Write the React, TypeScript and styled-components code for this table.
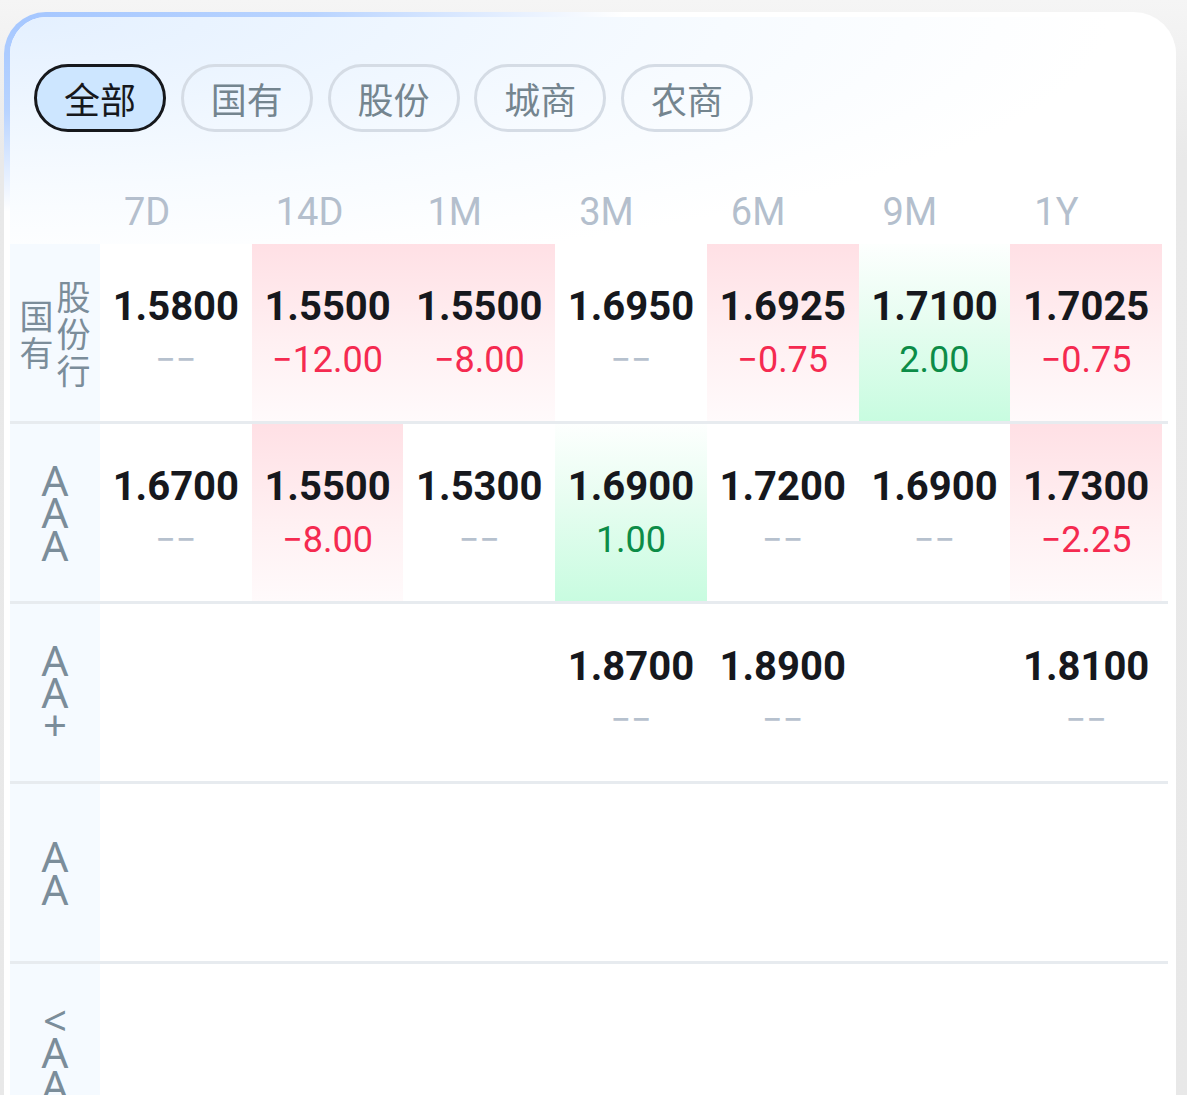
import React from 'react';
import styled, { createGlobalStyle } from 'styled-components';

const Global = createGlobalStyle`
  html, body { margin: 0; padding: 0; overflow: hidden; }
  body {
    background: linear-gradient(180deg, #f5f5f5 0px, #e9e9e9 160px, #e8e8e8 100%);
    min-height: 100vh;
    font-family: Roboto, "Noto Sans", "Noto Sans CJK SC", sans-serif;
  }
`;

const Page = styled.div`
  padding: 12px 11px 0 4px;
`;

const Card = styled.div`
  border-style: solid;
  border-color: transparent;
  border-width: 5px 0 0 6px;
  border-radius: 42px 42px 0 0;
  background:
    linear-gradient(#ffffff, #ffffff) padding-box,
    radial-gradient(ellipse 620px 200px at 0 0, #a4c6ff 0%, #b9d4ff 50%, #ffffff 100%) border-box;
  overflow: hidden;
`;

const Head = styled.div`
  background: radial-gradient(ellipse 1100px 260px at 0 0, #e4f0ff 0%, #eef6ff 35%, #f7fbff 65%, #fdfeff 90%, #ffffff 100%);
  padding: 47px 0 0 24px;
`;

const Tabs = styled.div`
  display: flex;
  gap: 14.75px;
`;

const Tab = styled.div<{ $active?: boolean }>`
  box-sizing: border-box;
  width: 132px;
  height: 68px;
  border-radius: 34px;
  border: 3px solid ${(p) => (p.$active ? '#16181c' : '#d5dce5')};
  background: ${(p) => (p.$active ? '#cde6ff' : 'transparent')};
  color: ${(p) => (p.$active ? '#16181c' : '#74858f')};
  font-family: "Noto Sans CJK SC", sans-serif;
  font-size: 36px;
  display: flex;
  align-items: center;
  justify-content: center;
`;

const Grid = styled.div`
  display: grid;
  grid-template-columns: 90px repeat(7, 1fr) 6px;
  margin-right: 8px;
`;

const HeadGrid = styled(Grid)`
  margin-top: 48px;
  margin-left: -24px;
  height: 64px;
  align-items: center;
`;

const ColTitle = styled.div`
  padding-left: 24px;
  font-size: 38px;
  color: #b4bfcd;
  font-family: Roboto, sans-serif;
  line-height: 1;
`;

const Row = styled(Grid)`
  height: 177px;
  border-bottom: 3px solid #e7ebef;
`;

const LabelCell = styled.div`
  background: #f5faff;
  display: flex;
  justify-content: center;
  align-items: center;
  gap: 3px;
  color: #7b8d9a;
`;

const LabelCol = styled.div`
  display: flex;
  flex-direction: column;
  align-items: center;
`;

const LabelChar = styled.span<{ $latin?: boolean }>`
  display: block;
  font-family: ${(p) => (p.$latin ? '"Noto Sans", sans-serif' : '"Noto Sans CJK SC", sans-serif')};
  font-size: ${(p) => (p.$latin ? '42px' : '34px')};
  line-height: ${(p) => (p.$latin ? '32.5px' : '37px')};
  height: ${(p) => (p.$latin ? '32.5px' : '37px')};
`;

type Tone = 'up' | 'down';

const ValueCell = styled.div<{ $tone?: Tone }>`
  display: flex;
  flex-direction: column;
  align-items: center;
  justify-content: center;
  background: ${(p) =>
    p.$tone === 'down'
      ? 'linear-gradient(180deg, #ffe0e5 0%, #fff0f2 55%, #fffafb 100%)'
      : p.$tone === 'up'
      ? 'linear-gradient(180deg, #fdfffe 0%, #e6fdf0 45%, #c8fce0 100%)'
      : '#ffffff'};
`;

const Main = styled.div`
  font-family: Roboto, sans-serif;
  font-weight: 700;
  font-size: 40px;
  line-height: 48px;
  color: #16181d;
`;

const Sub = styled.div<{ $tone?: Tone }>`
  font-family: Roboto, sans-serif;
  font-size: 36px;
  line-height: 46px;
  margin-top: 6px;
  color: ${(p) => (p.$tone === 'down' ? '#f52a50' : p.$tone === 'up' ? '#0c8c47' : '#b6c1ce')};
`;

const Filler = styled.div``;

type Cell = { v: string; d?: string; tone?: Tone } | null;

const cols = ['7D', '14D', '1M', '3M', '6M', '9M', '1Y'];
const tabs = ['全部', '国有', '股份', '城商', '农商'];

const rows: { label: string[][]; latin?: boolean; cells: Cell[] }[] = [
  {
    label: [['国', '有'], ['股', '份', '行']],
    cells: [
      { v: '1.5800' },
      { v: '1.5500', d: '−12.00', tone: 'down' },
      { v: '1.5500', d: '−8.00', tone: 'down' },
      { v: '1.6950' },
      { v: '1.6925', d: '−0.75', tone: 'down' },
      { v: '1.7100', d: '2.00', tone: 'up' },
      { v: '1.7025', d: '−0.75', tone: 'down' },
    ],
  },
  {
    label: [['A', 'A', 'A']],
    latin: true,
    cells: [
      { v: '1.6700' },
      { v: '1.5500', d: '−8.00', tone: 'down' },
      { v: '1.5300' },
      { v: '1.6900', d: '1.00', tone: 'up' },
      { v: '1.7200' },
      { v: '1.6900' },
      { v: '1.7300', d: '−2.25', tone: 'down' },
    ],
  },
  {
    label: [['A', 'A', '+']],
    latin: true,
    cells: [null, null, null, { v: '1.8700' }, { v: '1.8900' }, null, { v: '1.8100' }],
  },
  {
    label: [['A', 'A']],
    latin: true,
    cells: [null, null, null, null, null, null, null],
  },
  {
    label: [['<', 'A', 'A']],
    latin: true,
    cells: [null, null, null, null, null, null, null],
  },
];

export default function App() {
  return (
    <Page>
      <Global />
      <Card>
        <Head>
          <Tabs>
            {tabs.map((t, i) => (
              <Tab key={t} $active={i === 0}>
                {t}
              </Tab>
            ))}
          </Tabs>
          <HeadGrid>
            <Filler />
            {cols.map((c) => (
              <ColTitle key={c}>{c}</ColTitle>
            ))}
            <Filler />
          </HeadGrid>
        </Head>
        {rows.map((r, ri) => (
          <Row key={ri}>
            <LabelCell>
              {r.label.map((col, ci) => (
                <LabelCol key={ci}>
                  {col.map((ch, k) => (
                    <LabelChar key={k} $latin={r.latin}>
                      {ch}
                    </LabelChar>
                  ))}
                </LabelCol>
              ))}
            </LabelCell>
            {r.cells.map((c, ci) => (
              <ValueCell key={ci} $tone={c?.tone}>
                {c && (
                  <>
                    <Main>{c.v}</Main>
                    <Sub $tone={c.tone}>{c.d ?? '−−'}</Sub>
                  </>
                )}
              </ValueCell>
            ))}
            <Filler />
          </Row>
        ))}
      </Card>
    </Page>
  );
}
